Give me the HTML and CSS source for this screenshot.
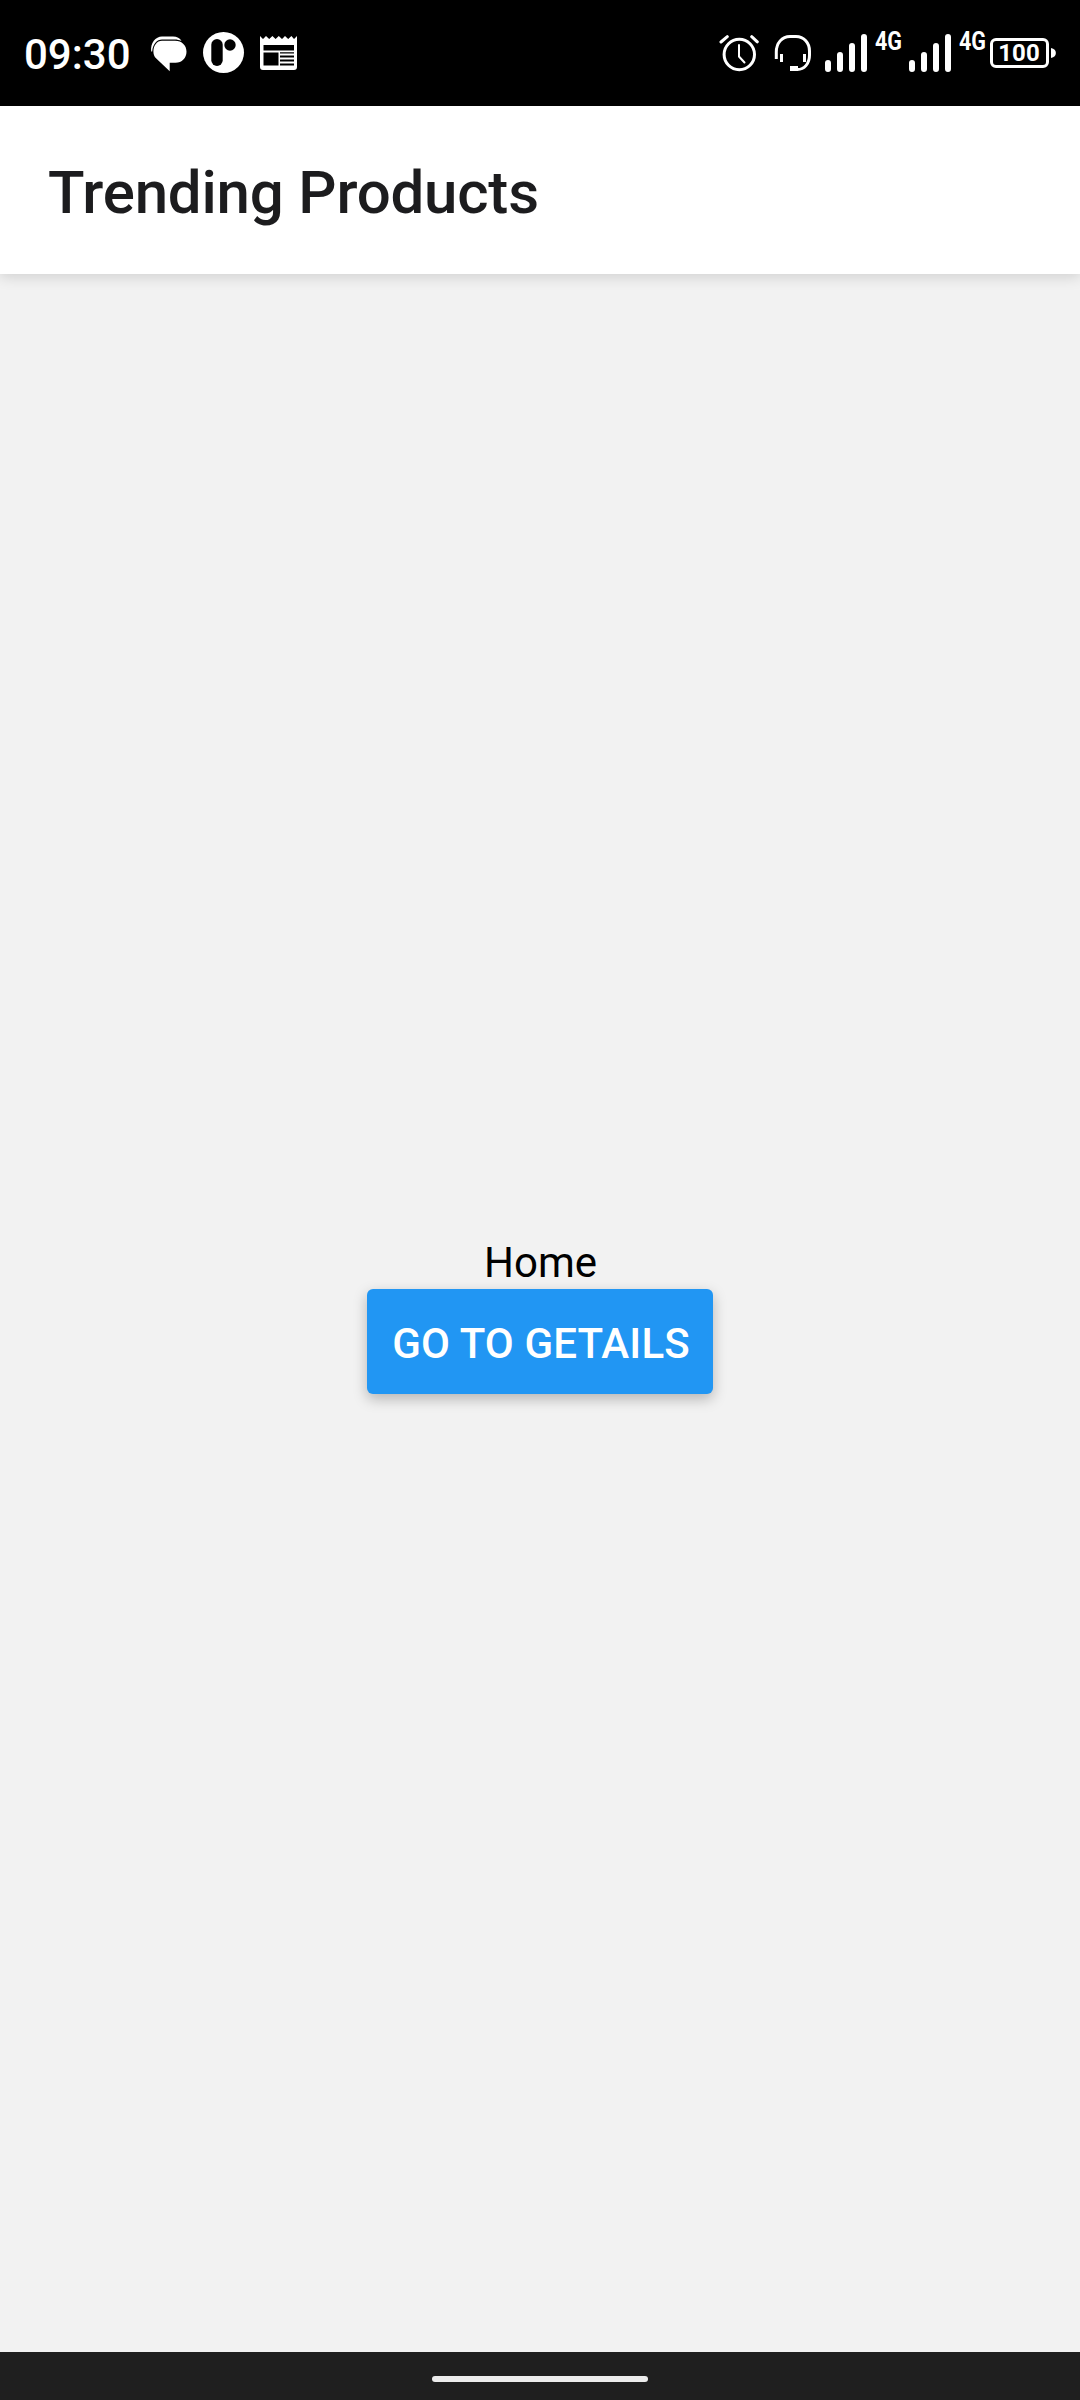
FILE: index.html
```html
<!DOCTYPE html>
<html lang="en">
<head>
<meta charset="utf-8">
<title>Trending Products</title>
<link rel="stylesheet" href="styles.css">
</head>
<body>
<div class="screen">
  <div class="status">
    <div class="status-left">
      <span class="clock">09:30</span>
      <svg class="icon chat" width="38" height="38" viewBox="150 35 38 38">
        <path d="M162 40.8H175C182 40.8 186.500 45.500 186.500 51.700C186.500 57.900 182 62.700 175.500 62.700H169.700V71.200L156 58.300C154.300 56.500 153.400 54.300 153.400 51.700C153.400 45.500 157 40.800 162 40.800Z"/>
        <path d="M151.200 51.500C150.200 43 155.500 36.500 162 36.500H173C177 36.500 180 38 181.500 41C179 40 177 39.500 175 39.500H162C157 39.500 152.700 44 152.200 51.500Z"/>
      </svg>
      <svg class="icon app" width="42" height="42" viewBox="203 32 42 42">
        <circle cx="223.500" cy="52.500" r="20.500"/>
        <rect class="cut" x="211.300" y="39" width="11.400" height="27" rx="5.700"/>
        <circle class="cut" cx="230" cy="45" r="5.700"/>
      </svg>
      <svg class="icon" width="38" height="36" viewBox="260 35 38 36">
        <path d="M260 36L263 39L266 36L269.200 39L272.400 36L275.600 39L278.800 36L282 39L285 36L288.200 39L291.400 36L294 39L297 36V67Q297 70 294 70H263Q260 70 260 67Z"/>
        <path class="cut" d="M263.500 45H294V50.500H263.500ZM263.500 52.500H278.500V65.500H263.500ZM280 52.200H294V53.500H280ZM280 55.500H294V57.500H280ZM280 59.500H294V61.500H280ZM280 63.500H294V65.500H280Z"/>
      </svg>
    </div>
    <div class="status-right">
      <svg class="icon" width="40" height="38" viewBox="719 34 40 38">
        <g class="line"><circle cx="739.300" cy="54.500" r="15.200"/><path d="M721 42L727.300 36.700M751.700 36.700L757.300 41.800"/><path class="thin" d="M739 45V56.500L744.500 62.500"/></g>
      </svg>
      <svg class="icon headset" width="38" height="38" viewBox="774 34 38 38">
        <path class="line" d="M776.300 59V52C776.300 43 782 36.500 790 36.500H796C804 36.500 809.500 43 809.500 51V55C809.500 64 804 69.500 797.500 69.500"/>
        <path d="M780 54H783V62H780ZM803 54H806V62H803ZM790 66H798V71H790Z"/>
      </svg>
      <svg class="icon signal" width="80" height="50" viewBox="824 24 80 50">
        <path class="bar" d="M828 63V69M840 55V69M852 46V69M864 37V69"/>
        <text x="875" y="50" textLength="27" lengthAdjust="spacingAndGlyphs">4G</text>
      </svg>
      <svg class="icon signal" width="80" height="50" viewBox="824 24 80 50">
        <path class="bar" d="M828 63V69M840 55V69M852 46V69M864 37V69"/>
        <text x="875" y="50" textLength="27" lengthAdjust="spacingAndGlyphs">4G</text>
      </svg>
      <svg class="icon battery" width="67" height="32" viewBox="989 37 67 32">
        <rect class="line" x="991.500" y="39.500" width="56" height="27" rx="4.500"/>
        <path d="M1051 48C1057.500 49 1057.500 57 1051 58Z"/>
        <text x="1019" y="61" text-anchor="middle">100</text>
      </svg>
    </div>
  </div>
  <header class="header"><h1 class="title">Trending Products</h1></header>
  <main class="content">
    <div class="label">Home</div>
    <button class="button">GO TO GETAILS</button>
  </main>
  <footer class="nav"><div class="handle"></div></footer>
</div>
</body>
</html>
```
FILE: styles.css
```css
* { box-sizing: border-box; }
body { margin: 0; font-family: Roboto, sans-serif; }
.screen { width: 1080px; height: 2400px; display: flex; flex-direction: column; background: #f2f2f2; }
.status { height: 106px; flex: none; background: #000; color: #fff; display: flex; justify-content: space-between; align-items: flex-start; }
.status-left { display: flex; padding-left: 24px; height: 106px; padding-top: 35px; }
.clock { font-size: 42px; font-weight: 500; line-height: 40px; width: 126px; white-space: nowrap; }
.icon { display: block; flex: none; fill: #fff; }
.app { margin: -3px 15px 0; }
.cut { fill: #000; }
.status-right { display: flex; padding: 24px 24px 0 0; }
.status-right .icon { margin-top: 10px; }
.line { fill: none; stroke: #fff; stroke-width: 3; stroke-linecap: round; }
.thin { stroke-width: 2; }
.headset { margin: 0 12px 0 15px; }
.headset .line { stroke-linecap: butt; }
.status-right .signal { margin: 0 4px 0 0; overflow: visible; }
.bar { fill: none; stroke: #fff; stroke-width: 6; stroke-linecap: round; }
.icon text { font: 700 25px Roboto, sans-serif; }
.status-right .battery { margin: 13px 0 0 -3px; }
.battery text { font-size: 24px; }
.header { height: 168px; flex: none; background: #fff; padding: 5px 48px 0; display: flex; align-items: center; box-shadow: 0 2px 14px rgba(0, 0, 0, .16); clip-path: inset(0 0 -30px 0); }
.title { margin: 0; font-size: 60px; font-weight: 500; line-height: 70px; letter-spacing: -0.2px; color: #1c1c1e; }
.content { flex: 1; display: flex; flex-direction: column; align-items: center; justify-content: center; padding-top: 6px; }
.label { font-size: 42px; line-height: 50px; color: #000; padding: 0 0 1px 1px; }
.button { width: 346px; height: 105px; padding: 4px 0 0 2px; border: 0; border-radius: 6px; background: #2196f3; color: #fff; font: 500 42px/50px Roboto, sans-serif; letter-spacing: 0.15px; white-space: nowrap; box-shadow: 0 5px 14px rgba(0, 0, 0, .26); }
.nav { height: 48px; flex: none; background: #1f1f1f; display: flex; justify-content: center; padding-top: 24px; }
.handle { width: 216px; height: 6px; border-radius: 3px; background: #ececec; }
```
